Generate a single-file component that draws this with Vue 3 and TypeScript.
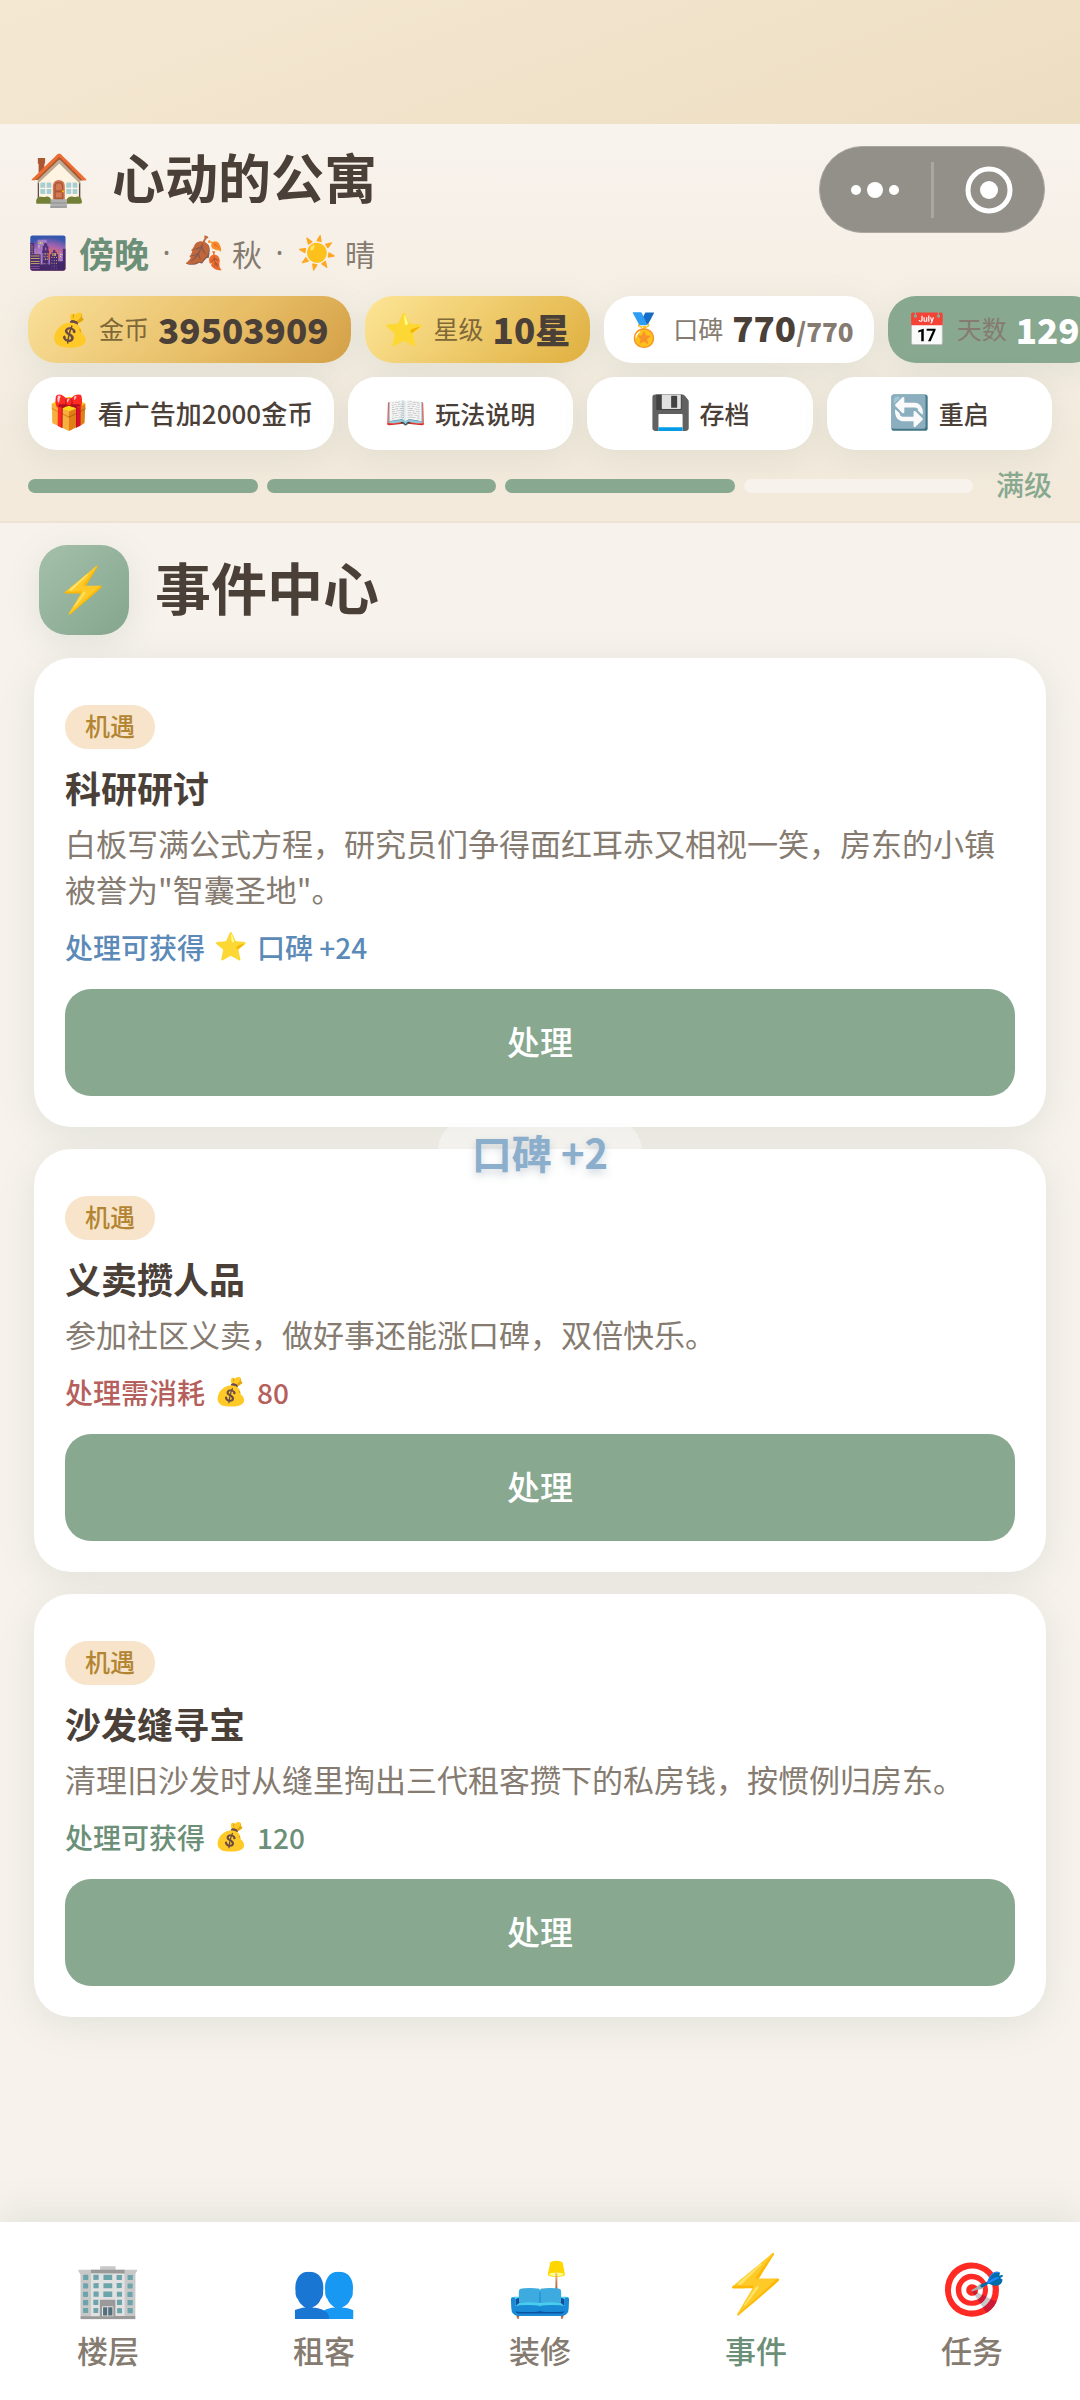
<script setup lang="ts">
interface Stat {
  icon: string
  label: string
  value: string
  max?: string
  tone: string
}

interface EventCard {
  id: number
  tag: string
  title: string
  text: string
  hint: string
  icon: string
  amount: string
  tone: string
}

const stats: Stat[] = [
  { icon: '💰', label: '金币', value: '39503909', tone: 'gold' },
  { icon: '⭐', label: '星级', value: '10星', tone: 'star' },
  { icon: '🏅', label: '口碑', value: '770', max: '/770', tone: 'plain' },
  { icon: '📅', label: '天数', value: '129', tone: 'green' },
]

const actions = [
  { icon: '🎁', label: '看广告加2000金币', wide: true },
  { icon: '📖', label: '玩法说明', wide: false },
  { icon: '💾', label: '存档', wide: false },
  { icon: '🔄', label: '重启', wide: false },
]

const segments = [true, true, true, false]

const events: EventCard[] = [
  {
    id: 1,
    tag: '机遇',
    title: '科研研讨',
    text: '白板写满公式方程，研究员们争得面红耳赤又相视一笑，房东的小镇被誉为"智囊圣地"。',
    hint: '处理可获得',
    icon: '⭐',
    amount: '口碑 +24',
    tone: 'blue',
  },
  {
    id: 2,
    tag: '机遇',
    title: '义卖攒人品',
    text: '参加社区义卖，做好事还能涨口碑，双倍快乐。',
    hint: '处理需消耗',
    icon: '💰',
    amount: '80',
    tone: 'red',
  },
  {
    id: 3,
    tag: '机遇',
    title: '沙发缝寻宝',
    text: '清理旧沙发时从缝里掏出三代租客攒下的私房钱，按惯例归房东。',
    hint: '处理可获得',
    icon: '💰',
    amount: '120',
    tone: 'green',
  },
]

const tabs = [
  { icon: '🏢', label: '楼层', active: false },
  { icon: '👥', label: '租客', active: false },
  { icon: '🛋️', label: '装修', active: false },
  { icon: '⚡', label: '事件', active: true },
  { icon: '🎯', label: '任务', active: false },
]
</script>

<template>
  <div class="app">
    <div class="status-band"></div>

    <header class="header">
      <div class="title-row">
        <span class="emoji house">🏠</span>
        <h1>心动的公寓</h1>
      </div>
      <div class="weather">
        <span class="emoji">🌆</span><strong>傍晚</strong>
        <span class="dot">·</span>
        <span class="emoji">🍂</span><span>秋</span>
        <span class="dot">·</span>
        <span class="emoji">☀️</span><span>晴</span>
      </div>

      <div class="stats">
        <div v-for="s in stats" :key="s.label" class="stat" :class="s.tone">
          <span class="emoji">{{ s.icon }}</span>
          <span class="stat-label">{{ s.label }}</span>
          <span class="stat-value">{{ s.value }}<small v-if="s.max">{{ s.max }}</small></span>
        </div>
      </div>

      <div class="actions">
        <button v-for="a in actions" :key="a.label" type="button" :class="{ wide: a.wide }">
          <span class="emoji">{{ a.icon }}</span>
          <span>{{ a.label }}</span>
        </button>
      </div>

      <div class="level">
        <span v-for="(on, i) in segments" :key="i" class="segment" :class="{ on }"></span>
        <span class="level-text">满级</span>
      </div>

      <div class="capsule">
        <button type="button" aria-label="更多">
          <svg width="48" height="20" viewBox="0 0 48 20" fill="#fff">
            <circle cx="5" cy="10" r="5" />
            <circle cx="24" cy="10" r="8" />
            <circle cx="43" cy="10" r="5" />
          </svg>
        </button>
        <span class="capsule-line"></span>
        <button type="button" aria-label="关闭">
          <svg width="48" height="48" viewBox="0 0 48 48" fill="none">
            <circle cx="24" cy="24" r="21" stroke="#fff" stroke-width="5" />
            <circle cx="24" cy="24" r="9" fill="#fff" />
          </svg>
        </button>
      </div>
    </header>

    <main class="main">
      <div class="section">
        <span class="section-icon"><span class="emoji">⚡</span></span>
        <h2>事件中心</h2>
      </div>

      <div class="cards">
        <article v-for="e in events" :key="e.id" class="card">
          <span class="tag">{{ e.tag }}</span>
          <h3>{{ e.title }}</h3>
          <p class="text">{{ e.text }}</p>
          <p class="reward" :class="e.tone">
            <span>{{ e.hint }}</span><span class="emoji">{{ e.icon }}</span><span>{{ e.amount }}</span>
          </p>
          <button type="button" class="handle">处理</button>
          <div v-if="e.id === 2" class="float">口碑 +2</div>
        </article>
      </div>
    </main>

    <nav class="tabs">
      <a v-for="t in tabs" :key="t.label" href="#" :class="{ active: t.active }">
        <span class="emoji">{{ t.icon }}</span>
        <span>{{ t.label }}</span>
      </a>
    </nav>
  </div>
</template>

<style>
body {
  background: #f7f2ec;
}
</style>

<style scoped>
.app {
  display: flex;
  flex-direction: column;
  min-height: 100vh;
  overflow: hidden;
  background: #f7f2ec;
  color: #4a4038;
  font-family: "Noto Sans CJK SC", "Noto Sans", sans-serif;
  font-size: 28px;
}

.app * {
  box-sizing: border-box;
}

h1,
h2,
h3,
p {
  margin: 0;
}

button {
  border: 0;
  padding: 0;
  font-family: inherit;
  color: inherit;
  cursor: pointer;
}

.emoji {
  display: inline-flex;
  align-items: center;
  justify-content: center;
  flex: none;
  line-height: 1;
  font-family: "Noto Color Emoji", "Noto Sans CJK SC", sans-serif;
}

.status-band {
  height: 124px;
  background: linear-gradient(160deg, #f5e8d3 0%, #eddec2 100%);
}

.header {
  position: relative;
  padding: 24px 28px 17px;
  border-bottom: 2px solid #ece3d3;
  background: linear-gradient(180deg, #f8f3ed 0%, #f2e9da 100%);
}

.title-row {
  display: flex;
  align-items: center;
  gap: 20px;
  height: 64px;
}

.house {
  width: 64px;
  font-size: 50px;
}

h1 {
  padding-bottom: 8px;
  font-size: 53px;
  line-height: 56px;
  font-weight: 700;
}

.weather {
  display: flex;
  align-items: center;
  gap: 8px;
  height: 44px;
  margin-top: 19px;
  font-size: 30px;
  line-height: 44px;
  color: #857b70;
}

.weather .emoji {
  width: 40px;
  font-size: 32px;
}

.weather strong {
  margin-left: 3px;
  font-size: 35px;
  color: #6c8f78;
}

.dot {
  width: 19px;
  font-family: "Noto Sans", sans-serif;
  text-align: center;
}

.stats {
  display: flex;
  gap: 14px;
  height: 67px;
  margin-top: 21px;
}

.stat {
  display: flex;
  flex: none;
  align-items: center;
  gap: 9px;
  padding: 0 20px;
  border-radius: 28px;
  background: #fff;
  box-shadow: 0 8px 32px rgba(120, 150, 130, 0.14);
  line-height: 56px;
  white-space: nowrap;
}

.stat .emoji {
  width: 40px;
  font-size: 32px;
  line-height: 1;
}

.stat-label {
  padding-bottom: 4px;
  font-size: 25px;
  color: #857b70;
}

.stat-value {
  padding-bottom: 2px;
  font-size: 35px;
  font-weight: 800;
}

.stat-value small {
  font-size: 26px;
  color: #857b70;
}

.gold {
  padding: 0 22px;
  background: linear-gradient(135deg, #f9e09a, #e7bd65 60%, #d4a047);
}

.star {
  background: linear-gradient(135deg, #fde596, #e0b040);
}

.gold .stat-label,
.star .stat-label {
  color: #806838;
}

.stat.green {
  background: #88a890;
}

.green .stat-value {
  color: #fff;
}

.actions {
  display: flex;
  gap: 14px;
  height: 73px;
  margin-top: 14px;
}

.actions button {
  display: flex;
  flex: 1;
  align-items: center;
  justify-content: center;
  gap: 9px;
  padding-bottom: 2px;
  border-radius: 28px;
  background: #fff;
  box-shadow: 0 8px 32px rgba(120, 150, 130, 0.14);
  font-size: 25px;
  font-weight: 500;
  white-space: nowrap;
}

.actions .wide {
  flex: 0 0 306px;
  font-size: 26px;
}

.actions .emoji {
  width: 40px;
  font-size: 33px;
}

.level {
  display: flex;
  align-items: center;
  gap: 9px;
  height: 36px;
  margin-top: 18px;
}

.segment {
  flex: 1;
  height: 14px;
  border-radius: 7px;
  background: #f7f2ec;
}

.segment.on {
  background: #88a890;
}

.level-text {
  margin-left: 14px;
  padding-bottom: 4px;
  font-size: 28px;
  line-height: 36px;
  font-weight: 500;
  color: #88a890;
}

.capsule {
  position: absolute;
  top: 22px;
  right: 35px;
  display: flex;
  align-items: center;
  width: 226px;
  height: 87px;
  border: 1px solid #aaa7a0;
  border-radius: 44px;
  background: #93908a;
}

.capsule button {
  display: flex;
  flex: 1;
  align-items: center;
  justify-content: center;
  background: none;
}

.capsule-line {
  width: 3px;
  height: 56px;
  background: #aaa7a1;
}

.main {
  flex: 1;
  padding: 22px 34px 40px;
}

.section {
  display: flex;
  align-items: center;
  gap: 26px;
  margin: 0 5px 23px;
}

.section-icon {
  display: flex;
  align-items: center;
  justify-content: center;
  width: 90px;
  height: 90px;
  border-radius: 28px;
  background: linear-gradient(135deg, #a5c0ab, #84a68d);
  box-shadow: 0 8px 32px rgba(120, 150, 130, 0.16);
  font-size: 44px;
}

h2 {
  padding-bottom: 8px;
  font-size: 56px;
  line-height: 60px;
  font-weight: 700;
}

.cards {
  display: flex;
  flex-direction: column;
  gap: 22px;
}

.card {
  position: relative;
  display: flex;
  flex-direction: column;
  padding: 47px 31px 31px;
  border-radius: 37px;
  background: #fff;
  box-shadow: 0 8px 36px rgba(120, 150, 130, 0.16);
}

.tag {
  align-self: flex-start;
  padding: 0 20px 4px;
  border-radius: 22px;
  background: #f7e4ca;
  font-size: 25px;
  line-height: 40px;
  font-weight: 500;
  color: #b38532;
}

h3 {
  margin-top: 13px;
  font-size: 36px;
  line-height: 50px;
  font-weight: 700;
}

.text {
  margin-top: 8px;
  font-size: 31px;
  line-height: 46px;
  color: #857b70;
}

.reward {
  display: flex;
  align-items: center;
  gap: 9px;
  margin-top: 15px;
  line-height: 40px;
  font-weight: 500;
}

.reward .emoji {
  width: 34px;
  font-size: 27px;
}

.reward.blue {
  color: #5b8ab8;
}

.reward.red {
  color: #b5605c;
}

.reward.green {
  color: #6c8f78;
}

.handle {
  height: 107px;
  margin-top: 22px;
  padding-bottom: 4px;
  border-radius: 26px;
  background: #88a890;
  font-size: 33px;
  font-weight: 500;
  color: #fff;
}

.float {
  position: absolute;
  top: -30px;
  left: 50%;
  padding: 0 34px;
  border-radius: 32px;
  background: rgba(255, 255, 255, 0.4);
  transform: translateX(-50%);
  font-size: 40px;
  line-height: 66px;
  font-weight: 700;
  color: #8aaecb;
  text-shadow: 0 4px 8px rgba(100, 120, 140, 0.3);
  white-space: nowrap;
}

.tabs {
  display: flex;
  height: 178px;
  background: #fff;
  box-shadow: 0 -8px 36px rgba(120, 150, 130, 0.16);
}

.tabs a {
  display: flex;
  flex: 1;
  flex-direction: column;
  align-items: center;
  padding-top: 38px;
  font-size: 31px;
  line-height: 44px;
  font-weight: 500;
  color: #857b70;
  text-decoration: none;
}

.tabs .emoji {
  height: 60px;
  margin-bottom: 8px;
  font-size: 53px;
}

.tabs .active {
  color: #6c8f78;
}

.tabs .active .emoji {
  font-size: 56px;
  transform: translateY(-6px);
}
</style>
